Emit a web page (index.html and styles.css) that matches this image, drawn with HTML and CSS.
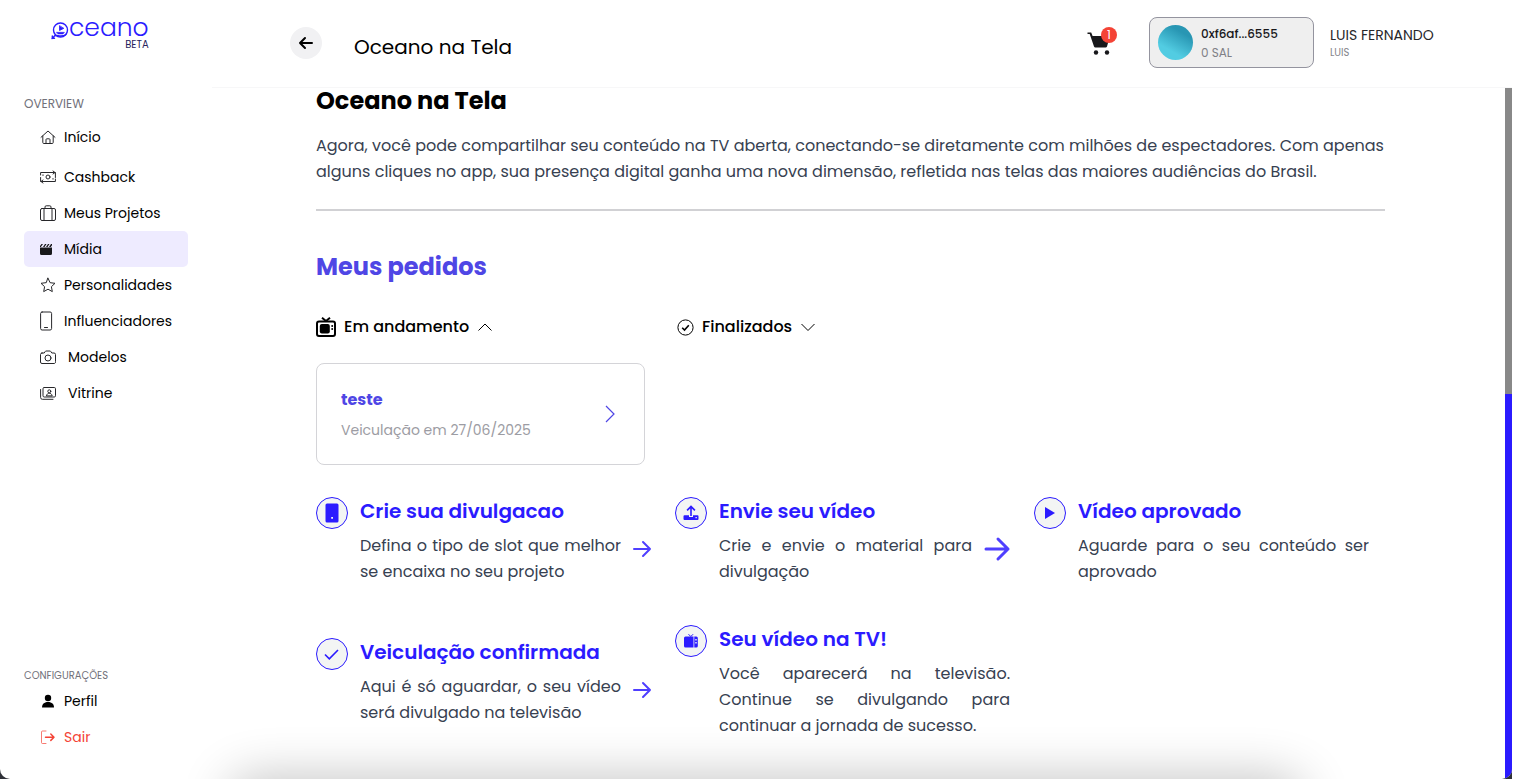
FILE: index.html
```html
<!DOCTYPE html>
<html lang="pt-BR">
<head>
<meta charset="utf-8">
<meta name="viewport" content="width=device-width, initial-scale=1">
<title>Oceano na Tela</title>
<link rel="stylesheet" href="styles.css">
</head>
<body>
<div class="app">
  <aside class="sidebar">
    <a class="logo" href="#" aria-label="Oceano Beta">
      <span class="logo-row">
        <svg class="logo-mark" viewBox="0 0 18 18" fill="none" stroke="currentColor" stroke-width="1.4" stroke-linecap="round" stroke-linejoin="round"><circle cx="9.500" cy="8" r="7"/><path d="M4.500 13 1 16.500M1.300 14v2.300h2.200M3.500 13.800c3-1.500 6 2.400 11.500-1.300"/><path d="M8.500 4v4.500l4-2z" fill="currentColor" stroke-width=".8"/><path d="M5.500 10.300h8l-1.500 1.700H7z" fill="currentColor" stroke-width=".5"/></svg>
        <span class="logo-word">ceano</span>
      </span>
      <span class="logo-tag">BETA</span>
    </a>

    <nav class="nav">
      <p class="nav-label">OVERVIEW</p>
      <a class="nav-item nav-home" href="#"><svg class="icon" viewBox="0 0 16 16"><path d="M1 8.300 8 2l7 6.300M2.800 7v6.500a1 1 0 0 0 1 1h8.400a1 1 0 0 0 1-1V7M6 14.500V10.600a.8.8 0 0 1 .8-.8h2.400a.8.8 0 0 1 .8.800v3.900"/></svg>Início</a>
      <a class="nav-item" href="#"><svg class="icon" viewBox="0 0 16 16"><path d="M.600 6V3.500H14.500M13 2l2 1.500-2 1.500M15.400 10v2.500H1.500M3 11l-2 1.500L3 14M.600 8.500v4M15.400 3.500v5M3 6.500v-.7M13 9.500v.7"/><circle cx="8" cy="8" r="2"/></svg>Cashback</a>
      <a class="nav-item" href="#"><svg class="icon" viewBox="0 0 16 16"><rect x=".500" y="3.500" width="15" height="12" rx="1.500"/><path d="M4 15.500v-12M12 15.500v-12M5 3.500V2a1.200 1.200 0 0 1 1.200-1.200h3.600A1.200 1.200 0 0 1 11 2v1.500"/></svg>Meus Projetos</a>
      <a class="nav-item active" href="#" aria-current="page"><svg class="icon" viewBox="0 0 16 16"><g fill="#18181b" stroke="none"><path d="M0 6.500h12v6a1.500 1.500 0 0 1-1.500 1.500h-9A1.500 1.500 0 0 1 0 12.500z"/><path d="M0 6v-1L1.500 3H3L.800 6zM3 6l2-3h1.500l-2 3zM6 6l2-3h1.500l-2 3zM9 6l2-3h1v1.200L10.800 6z"/></g></svg>Mídia</a>
      <a class="nav-item" href="#"><svg class="icon" viewBox="0 0 16 16"><path d="m8 1.200 2.100 4.500 4.900.6-3.600 3.400.9 4.900L8 12.200l-4.300 2.400.9-4.900L1 6.300l4.900-.6z"/></svg>Personalidades</a>
      <a class="nav-item" href="#"><svg class="icon icon-tall" viewBox="0 0 16 20"><rect x=".600" y="1" width="11" height="18" rx="1.500"/><path d="M4.500 16.500h3"/></svg>Influenciadores</a>
      <a class="nav-item wide" href="#"><svg class="icon" viewBox="0 0 16 16"><path d="M2 4h2.200l1-1.500a1 1 0 0 1 .8-.5h4a1 1 0 0 1 .8.500l1 1.500H14a1.500 1.500 0 0 1 1.500 1.500v7A1.500 1.500 0 0 1 14 14.500H2A1.500 1.500 0 0 1 .500 13V5.500A1.500 1.500 0 0 1 2 4z"/><circle cx="8" cy="9" r="3"/></svg>Modelos</a>
      <a class="nav-item wide" href="#"><svg class="icon" viewBox="0 0 16 16"><rect x="3" y="2.500" width="12.500" height="9.500" rx="1.200"/><path d="M.600 4.500v8a1.800 1.800 0 0 0 1.800 1.800H13M6.500 10.500C7 8.800 8 8.300 9.300 8.300s2.300.5 2.800 2.200z"/><circle cx="9.300" cy="6.300" r="1.500"/></svg>Vitrine</a>
    </nav>

    <nav class="nav nav-bottom">
      <p class="nav-label small">CONFIGURAÇÕES</p>
      <a class="nav-item" href="#"><svg class="icon" viewBox="0 0 16 16"><g fill="#000" stroke="none"><circle cx="8" cy="5" r="3.200"/><path d="M2 14.500c0-3.200 2-5.500 6-5.500s6 2.300 6 5.500z"/></g></svg>Perfil</a>
      <a class="nav-item exit" href="#"><svg class="icon" viewBox="0 0 16 16"><path d="M6 2H2.500a1 1 0 0 0-1 1v10.500a1 1 0 0 0 1 1H6" opacity=".7"/><path d="M5.500 8.200H14M10.800 5l3.200 3.200-3.200 3.200" stroke-width="1.500"/></svg>Sair</a>
    </nav>
  </aside>

  <div class="main">
    <header class="topbar">
      <button class="back" type="button" aria-label="Voltar"><svg viewBox="0 0 16 16"><path d="M14 8H2M7 3 2 8l5 5"/></svg></button>
      <p class="page-title">Oceano na Tela</p>
      <button class="cart" type="button" aria-label="Carrinho">
        <svg viewBox="0 0 24 24"><path d="M.500 1.500h3.700l1.400 3.500H23l-3 10.500a1.500 1.500 0 0 1-1.500 1H8.400a1.500 1.500 0 0 1-1.400-1L2.700 3H.500z"/><circle cx="9" cy="21.500" r="2.200"/><circle cx="20" cy="21.500" r="2.200"/></svg>
        <span class="badge">1</span>
      </button>
      <button class="wallet" type="button">
        <span class="avatar"></span>
        <span class="wallet-text"><strong>0xf6af...6555</strong><small>0 SAL</small></span>
      </button>
      <div class="user"><span class="user-name">LUIS FERNANDO</span><span class="user-role">LUIS</span></div>
    </header>

    <div class="scroll">
      <main class="content">
        <h1>Oceano na Tela</h1>
        <p class="intro">Agora, você pode compartilhar seu conteúdo na TV aberta, conectando-se diretamente com milhões de espectadores. Com apenas alguns cliques no app, sua presença digital ganha uma nova dimensão, refletida nas telas das maiores audiências do Brasil.</p>
        <hr>
        <h2>Meus pedidos</h2>
        <div class="orders">
          <button class="tab" type="button" aria-expanded="true"><svg class="tab-icon" viewBox="0 0 20 20"><path d="m6 .800 4 3.200 4-3.200" fill="none" stroke="#000" stroke-width="2"/><rect x="1" y="4.500" width="18" height="14.500" rx="2" fill="none" stroke="#000" stroke-width="2"/><rect x="3.800" y="7" width="10" height="9.500" rx="2"/><circle cx="16.200" cy="9" r="1"/><circle cx="16.200" cy="12" r="1"/></svg>Em andamento<svg class="chevron" viewBox="0 0 16 16"><path d="M1.500 11.500 8 5l6.500 6.500"/></svg></button>
          <button class="tab" type="button" aria-expanded="false"><svg class="tab-check" viewBox="0 0 17 17"><circle cx="8.500" cy="8.500" r="7.600"/><path d="m5.200 8.800 2.300 2.300 4.300-4.800" stroke-width="1.600"/></svg>Finalizados<svg class="chevron" viewBox="0 0 16 16"><path d="M1.500 5 8 11.500 14.500 5"/></svg></button>
          <a class="card" href="#">
            <span class="card-text"><strong>teste</strong><span>Veiculação em 27/06/2025</span></span>
            <svg class="card-arrow" viewBox="0 0 20 20"><path d="m6 2 8 8-8 8"/></svg>
          </a>
        </div>

        <section class="steps">
          <article class="step">
            <span class="step-icon"><svg viewBox="0 0 20 20"><path fill-rule="evenodd" d="M5 .500h10a1.500 1.500 0 0 1 1.500 1.500v16a1.500 1.500 0 0 1-1.500 1.500H5A1.500 1.500 0 0 1 3.500 18V2A1.500 1.500 0 0 1 5 .500zM9.200 14h1.800v1.800H9.200z"/></svg></span>
            <div class="step-body"><h3>Crie sua divulgacao</h3>
              <div class="step-row"><p>Defina o tipo de slot que melhor se encaixa no seu projeto</p><svg class="arrow" viewBox="0 0 18 20"><path d="M1 10h16M10 3l7 7-7 7"/></svg></div></div>
          </article>
          <article class="step">
            <span class="step-icon"><svg viewBox="0 0 20 20"><path d="M9.200 13V5.500L6.700 8 5.500 6.800 10 2.300l4.500 4.500L13.300 8l-2.500-2.500V13z"/><path fill-rule="evenodd" d="M3.500 12.300H8V14h4v-1.700h4.500a1 1 0 0 1 1 1V16a1 1 0 0 1-1 1h-13a1 1 0 0 1-1-1v-2.700a1 1 0 0 1 1-1zM14.500 14h1.300v1.300h-1.300z"/></svg></span>
            <div class="step-body"><h3>Envie seu vídeo</h3>
              <div class="step-row"><p>Crie e envie o material para divulgação</p><svg class="arrow large" viewBox="0 0 26 28"><path d="M2 14h22M14 4l10 10-10 10"/></svg></div></div>
          </article>
          <article class="step">
            <span class="step-icon"><svg viewBox="0 0 20 20"><path d="M5 4v12l10-6z"/></svg></span>
            <div class="step-body"><h3>Vídeo aprovado</h3>
              <div class="step-row"><p>Aguarde para o seu conteúdo ser aprovado</p></div></div>
          </article>
          <article class="step">
            <span class="step-icon"><svg viewBox="0 0 20 20"><path class="line" d="m3 10.500 4.300 4.300L16 6"/></svg></span>
            <div class="step-body"><h3>Veiculação confirmada</h3>
              <div class="step-row"><p>Aqui é só aguardar, o seu vídeo será divulgado na televisão</p><svg class="arrow" viewBox="0 0 18 20"><path d="M1 10h16M10 3l7 7-7 7"/></svg></div></div>
          </article>
          <article class="step">
            <span class="step-icon"><svg viewBox="0 0 20 20"><path fill-rule="evenodd" d="M4.500 5.500h8v11h-8a1.500 1.500 0 0 1-1.500-1.500V7a1.500 1.500 0 0 1 1.500-1.500zM13.300 5.500h2A1.500 1.500 0 0 1 16.800 7v8a1.500 1.500 0 0 1-1.500 1.500h-2zM14.300 8v1.400h1.400V8zM14.300 11v1.400h1.400V11z"/><path d="m7.500 3.200 2.300 2.300 2.300-2.300" fill="none" stroke="currentColor"/></svg></span>
            <div class="step-body"><h3>Seu vídeo na TV!</h3>
              <div class="step-row"><p>Você aparecerá na televisão. Continue se divulgando para continuar a jornada de sucesso.</p></div></div>
          </article>
        </section>
      </main>
      <div class="rail" aria-hidden="true"><div class="thumb"></div></div>
    </div>
  </div>
  <div class="shade" aria-hidden="true"></div>
</div>
</body>
</html>
```
FILE: styles.css
```css
* { box-sizing: border-box; }

body {
  margin: 0;
  padding-right: 4px;
  background: #fff;
  color: #000;
  font-family: Poppins, Inter, "Open Sans", sans-serif;
  font-size: 16px;
}

h1, h2, h3, p { margin: 0; }
a { color: inherit; text-decoration: none; }
button { font: inherit; color: inherit; padding: 0; border: 0; background: none; }
svg { display: block; flex: none; }

.app {
  position: relative;
  display: flex;
  height: 100vh;
  overflow: hidden;
  background: linear-gradient(#fff, #fff 50%, #2f3138 50%);
}

/* Sidebar */
.sidebar {
  display: flex;
  flex-direction: column;
  flex: none;
  width: 212px;
  padding: 0 24px 24px;
  background: #fff;
  border-bottom-left-radius: 10px;
}
.logo {
  display: flex;
  flex-direction: column;
  align-items: flex-end;
  align-self: flex-start;
  height: 93px;
  padding: 16px 0 0 27px;
  color: #2b1bff;
}
.logo-row { display: flex; align-items: center; height: 24px; }
.logo-mark { width: 18px; height: 18px; margin-top: 6px; }
.logo-word { font-size: 25px; font-weight: 300; line-height: 24px; }
.logo-tag { font-size: 10px; line-height: 10px; color: #27235c; }

.nav { display: flex; flex-direction: column; }
.nav-bottom { margin-top: auto; }
.nav-label { height: 26px; font-size: 12px; line-height: 22px; color: #71717a; }
.nav-label.small { height: 16px; font-size: 10px; line-height: 18px; }
.nav-item {
  display: flex;
  align-items: center;
  gap: 8px;
  height: 36px;
  padding: 0 16px;
  border-radius: 5px;
  font-size: 14px;
  white-space: nowrap;
}
.nav-home { margin-bottom: 4px; }
.nav-item.wide { gap: 12px; }
.nav-item.active { background: #eeebff; }
.nav-item.exit { color: #f44336; }
.icon { width: 16px; height: 16px; fill: none; stroke: #27272a; stroke-width: 1; stroke-linecap: round; stroke-linejoin: round; }
.icon-tall { height: 20px; }
.exit .icon { stroke: #f44336; }

/* Top bar */
.main { display: flex; flex-direction: column; flex: 1; min-width: 0; background: #fff; border-bottom-right-radius: 10px; overflow: hidden; }
.topbar {
  display: flex;
  align-items: center;
  flex: none;
  height: 88px;
  padding: 0 78px 2px;
  border-bottom: 1px solid #f7f7f8;
}
.back { display: grid; place-items: center; width: 32px; height: 32px; border-radius: 50%; background: #f1f1f3; }
.back svg { width: 16px; height: 16px; fill: none; stroke: #000; stroke-width: 2; stroke-linecap: round; stroke-linejoin: round; }
.page-title { flex: 1; margin-left: 32px; padding-top: 8px; font-size: 20px; line-height: 28px; }
.cart { position: relative; width: 26px; height: 26px; margin-right: 36px; }
.cart svg { width: 24px; height: 24px; fill: #18181b; }
.badge {
  position: absolute;
  top: -3px;
  right: -4px;
  width: 16px;
  height: 16px;
  border-radius: 50%;
  background: #f44336;
  color: #fff;
  font-size: 12px;
  line-height: 16px;
  text-align: center;
}
.wallet {
  display: flex;
  align-items: center;
  gap: 8px;
  width: 165px;
  height: 51px;
  padding: 0 8px;
  border: 1px solid #94949f;
  border-radius: 8px;
  background: #efefef;
  text-align: left;
}
.avatar { width: 35px; height: 35px; border-radius: 50%; background: linear-gradient(30deg, #52cce2 30%, #2896b3 75%); }
.wallet-text { display: flex; flex-direction: column; }
.wallet-text strong { font-size: 12px; font-weight: 500; line-height: 20px; color: #18181b; }
.wallet-text small { font-size: 12px; line-height: 18px; color: #808086; }
.user { display: flex; flex-direction: column; width: 104px; margin-left: 16px; white-space: nowrap; }
.user-name { font-size: 14px; line-height: 20px; color: #27272a; }
.user-role { font-size: 10px; line-height: 16px; color: #85858c; }

/* Content */
.scroll { display: flex; flex: 1; min-height: 0; }
.content { flex: 1; min-width: 0; padding: 0 120px 0 104px; }
.rail { flex: none; width: 7px; background: #888; }
.thumb { height: 56%; margin-top: 306px; background: #2b1bff; }

h1 { font-size: 24px; font-weight: 700; line-height: 26px; }
.intro { margin-top: 19px; line-height: 26px; color: #374151; }
hr { height: 2px; margin: 24px 0 39px; border: 0; background: #d1d1d4; }
h2 { font-size: 24px; font-weight: 700; line-height: 34px; color: #4f46e5; }

.orders { display: grid; grid-template-columns: repeat(3, 1fr); column-gap: 32px; row-gap: 23px; margin-top: 30px; padding-right: 18px; }
.tab { display: flex; align-items: center; gap: 8px; font-weight: 500; line-height: 26px; }
.tab-icon { width: 20px; height: 20px; }
.tab-check { width: 17px; height: 17px; fill: none; stroke: #000; }
.chevron { width: 16px; height: 16px; fill: none; stroke: #000; }
.card {
  grid-column: 1;
  display: flex;
  align-items: center;
  justify-content: space-between;
  padding: 24px;
  border: 1px solid #d4d4d8;
  border-radius: 8px;
}
.card-text { display: flex; flex-direction: column; gap: 8px; font-size: 14px; line-height: 20px; color: #9c9ca3; }
.card-text strong { font-size: 16px; line-height: 24px; color: #4f46e5; }
.card-arrow { width: 20px; height: 20px; fill: none; stroke: #4f46e5; stroke-width: 1.2; }

.steps { display: grid; grid-template-columns: repeat(3, 1fr); align-items: center; column-gap: 8px; row-gap: 40px; margin-top: 32px; }
.step { display: flex; gap: 12px; padding-right: 16px; }
.step:nth-child(-n+3) { align-self: start; }
.step-icon { display: grid; place-items: center; flex: none; width: 32px; height: 32px; border: 1px solid #2b1bff; border-radius: 50%; background: #f3f5f4; color: #2b1bff; }
.step-icon svg { width: 20px; height: 20px; fill: currentColor; }
.step-icon .line { fill: none; stroke: currentColor; stroke-width: 1.6; }
.step-body { flex: 1; min-width: 0; }
.step h3 { margin-bottom: 8px; font-size: 20px; font-weight: 600; line-height: 28px; color: #2b1bff; }
.step-row { display: flex; gap: 12px; }
.step-row p { flex: 1; line-height: 26px; color: #374151; text-align: justify; }
.arrow { width: 18px; height: 20px; margin-top: 6px; fill: none; stroke: #4f3fff; stroke-width: 2; stroke-linecap: round; stroke-linejoin: round; overflow: visible; }
.arrow.large { width: 26px; height: 28px; margin-top: 2px; stroke-width: 3; }

/* Soft shadow rising from the lower edge */
.shade {
  position: absolute;
  right: 220px;
  bottom: -40px;
  left: 240px;
  height: 30px;
  border-radius: 20px;
  box-shadow: 0 0 50px 12px rgba(0, 0, 0, 0.24);
  pointer-events: none;
}
```
